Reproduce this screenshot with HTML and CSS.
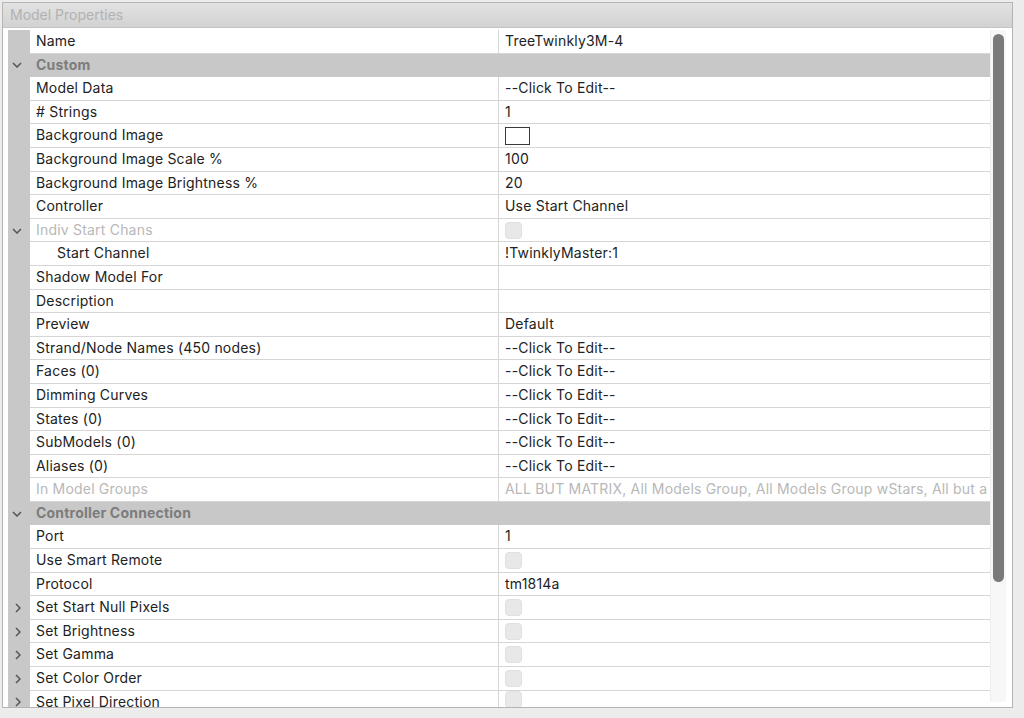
FILE: index.html
```
<!DOCTYPE html>
<html>
<head>
<meta charset="utf-8">
<link rel="stylesheet" href="styles.css">
</head>
<body>
<div class="panel">
  <div class="title">Model Properties</div>
  <div class="body">
    <div class="rows">
      <div class="row"><div class="gut"></div><div class="name">Name</div><div class="val">TreeTwinkly3M-4</div></div>
      <div class="row cat"><div class="gut"><svg class="chev" width="10" height="6" viewBox="0 0 10 6"><path d="M1 1 L5 5 L9 1" fill="none" stroke="#555" stroke-width="1.5"/></svg></div><div class="name">Custom</div><div class="val"></div></div>
      <div class="row"><div class="gut"></div><div class="name">Model Data</div><div class="val">--Click To Edit--</div></div>
      <div class="row"><div class="gut"></div><div class="name"># Strings</div><div class="val">1</div></div>
      <div class="row"><div class="gut"></div><div class="name">Background Image</div><div class="val"><span class="imgbox"></span></div></div>
      <div class="row"><div class="gut"></div><div class="name">Background Image Scale %</div><div class="val">100</div></div>
      <div class="row"><div class="gut"></div><div class="name">Background Image Brightness %</div><div class="val">20</div></div>
      <div class="row"><div class="gut"></div><div class="name">Controller</div><div class="val">Use Start Channel</div></div>
      <div class="row dis"><div class="gut"><svg class="chev" width="10" height="6" viewBox="0 0 10 6"><path d="M1 1 L5 5 L9 1" fill="none" stroke="#555" stroke-width="1.5"/></svg></div><div class="name">Indiv Start Chans</div><div class="val"><span class="check"></span></div></div>
      <div class="row"><div class="gut"></div><div class="name indent">Start Channel</div><div class="val">!TwinklyMaster:1</div></div>
      <div class="row"><div class="gut"></div><div class="name">Shadow Model For</div><div class="val"></div></div>
      <div class="row"><div class="gut"></div><div class="name">Description</div><div class="val"></div></div>
      <div class="row"><div class="gut"></div><div class="name">Preview</div><div class="val">Default</div></div>
      <div class="row"><div class="gut"></div><div class="name">Strand/Node Names (450 nodes)</div><div class="val">--Click To Edit--</div></div>
      <div class="row"><div class="gut"></div><div class="name">Faces (0)</div><div class="val">--Click To Edit--</div></div>
      <div class="row"><div class="gut"></div><div class="name">Dimming Curves</div><div class="val">--Click To Edit--</div></div>
      <div class="row"><div class="gut"></div><div class="name">States (0)</div><div class="val">--Click To Edit--</div></div>
      <div class="row"><div class="gut"></div><div class="name">SubModels (0)</div><div class="val">--Click To Edit--</div></div>
      <div class="row"><div class="gut"></div><div class="name">Aliases (0)</div><div class="val">--Click To Edit--</div></div>
      <div class="row dis"><div class="gut"></div><div class="name">In Model Groups</div><div class="val">ALL BUT MATRIX, All Models Group, All Models Group wStars, All but a</div></div>
      <div class="row cat"><div class="gut"><svg class="chev" width="10" height="6" viewBox="0 0 10 6"><path d="M1 1 L5 5 L9 1" fill="none" stroke="#555" stroke-width="1.5"/></svg></div><div class="name">Controller Connection</div><div class="val"></div></div>
      <div class="row"><div class="gut"></div><div class="name">Port</div><div class="val">1</div></div>
      <div class="row"><div class="gut"></div><div class="name">Use Smart Remote</div><div class="val"><span class="check"></span></div></div>
      <div class="row"><div class="gut"></div><div class="name">Protocol</div><div class="val">tm1814a</div></div>
      <div class="row"><div class="gut"><svg class="chevr" width="6" height="10" viewBox="0 0 6 10"><path d="M1 1 L5 5 L1 9" fill="none" stroke="#555" stroke-width="1.5"/></svg></div><div class="name">Set Start Null Pixels</div><div class="val"><span class="check"></span></div></div>
      <div class="row"><div class="gut"><svg class="chevr" width="6" height="10" viewBox="0 0 6 10"><path d="M1 1 L5 5 L1 9" fill="none" stroke="#555" stroke-width="1.5"/></svg></div><div class="name">Set Brightness</div><div class="val"><span class="check"></span></div></div>
      <div class="row"><div class="gut"><svg class="chevr" width="6" height="10" viewBox="0 0 6 10"><path d="M1 1 L5 5 L1 9" fill="none" stroke="#555" stroke-width="1.5"/></svg></div><div class="name">Set Gamma</div><div class="val"><span class="check"></span></div></div>
      <div class="row"><div class="gut"><svg class="chevr" width="6" height="10" viewBox="0 0 6 10"><path d="M1 1 L5 5 L1 9" fill="none" stroke="#555" stroke-width="1.5"/></svg></div><div class="name">Set Color Order</div><div class="val"><span class="check"></span></div></div>
      <div class="row last"><div class="gut"><svg class="chevr" width="6" height="10" viewBox="0 0 6 10"><path d="M1 1 L5 5 L1 9" fill="none" stroke="#555" stroke-width="1.5"/></svg></div><div class="name">Set Pixel Direction</div><div class="val"><span class="check"></span></div></div>
    </div>
    <div class="scroll"><div class="thumb"></div></div>
  </div>
</div>
</body>
</html>
```
FILE: styles.css
```
html, body {
  margin: 0;
  padding: 0;
  background: #ececec;
}
body {
  width: 1024px;
  height: 718px;
  overflow: hidden;
  font-family: Inter, "Liberation Sans", sans-serif;
  font-size: 14px;
  letter-spacing: 0.2px;
  color: #222;
}
.panel {
  margin: 2px 0 0 2px;
  width: 1009px;
  height: 704px;
  border: 1px solid #b4b4b4;
  background: #fff;
  display: flex;
  flex-direction: column;
  overflow: hidden;
}
.title {
  height: 24px;
  flex: none;
  background: linear-gradient(#e2e2e2, #d2d2d2);
  border-bottom: 1px solid #c4c4c4;
  color: #b2b2b2;
  font-size: 14px;
  line-height: 23px;
  padding-left: 7px;
  letter-spacing: 0;
}
.body {
  flex: 1;
  display: flex;
  padding: 2px 0 0 5px;
  background: #fff;
  overflow: hidden;
  min-height: 0;
}
.rows {
  width: 982px;
  flex: none;
  display: flex;
  flex-direction: column;
  overflow: hidden;
}
.row {
  flex: none;
  height: 23.6px;
  display: grid;
  grid-template-columns: 22px 469px 1fr;
  box-sizing: border-box;
}
.gut {
  background: #c8c8c8;
  display: flex;
  align-items: center;
}
.name, .val {
  border-bottom: 1px solid #d6d6d6;
  line-height: 22.6px;
  white-space: nowrap;
  overflow: hidden;
  padding-left: 6px;
  display: flex;
  align-items: center;
}
.last .name, .last .val {
  align-items: flex-start;
}
.name {
  border-right: 1px solid #d6d6d6;
}
.indent {
  padding-left: 27px;
}
.cat .name, .cat .val {
  background: #c8c8c8;
  border-color: #c8c8c8;
  font-weight: 700;
  color: #7c7c7c;
}
.dis .name, .dis .val {
  color: #b8b8b8;
}
.chev {
  margin-left: 4px;
}
.chevr {
  margin-left: 7px;
}
.imgbox {
  display: block;
  width: 23px;
  height: 16px;
  border: 1.5px solid #3a3a3a;
  background: #fff;
}
.check {
  display: block;
  width: 17px;
  height: 17px;
  border-radius: 4px;
  background: #e8e8e8;
  border: 0.5px solid #e0e0e0;
  box-sizing: border-box;
}
.scroll {
  width: 15px;
  flex: none;
  background: #f7f7f7;
  border-left: 1px solid #f0f0f0;
  margin-bottom: 5px;
}
.thumb {
  margin: 4px 0 0 2px;
  width: 11px;
  height: 548px;
  border-radius: 6px;
  background: #7a7a7a;
}
```
